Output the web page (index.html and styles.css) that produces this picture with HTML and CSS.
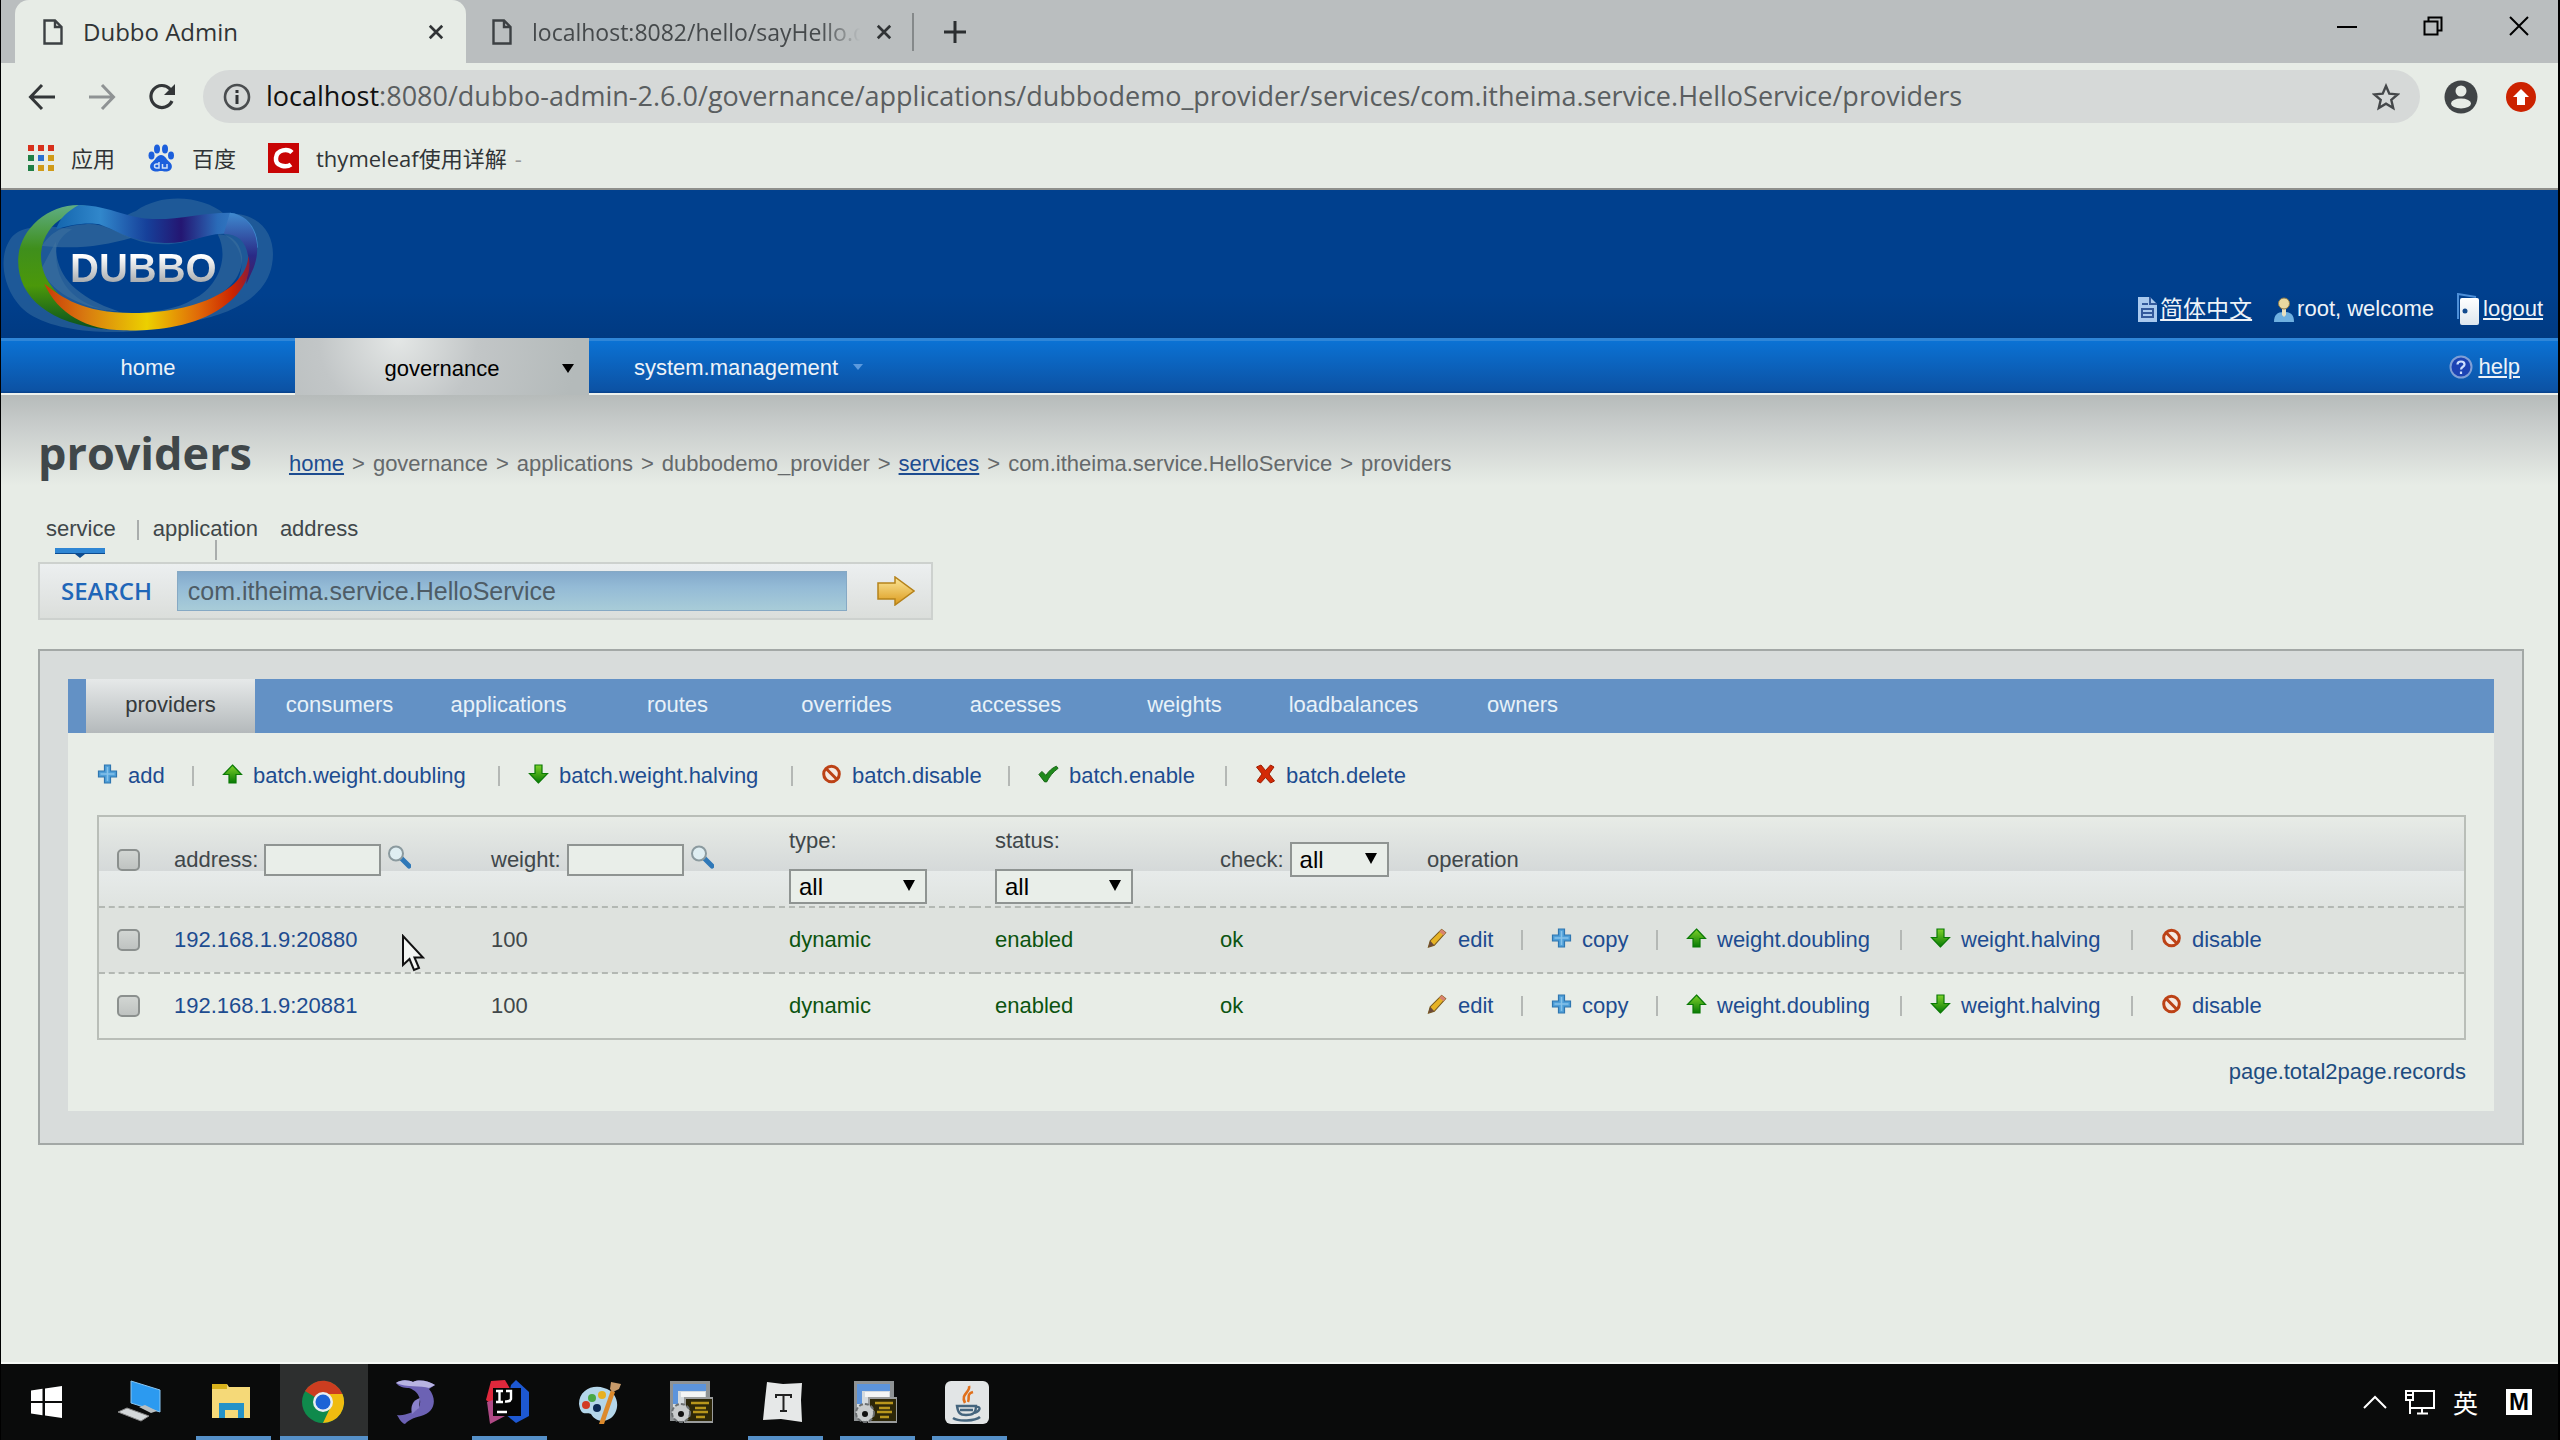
FILE: index.html
```html
<!DOCTYPE html>
<html lang="en">
<head>
<meta charset="utf-8">
<title>Dubbo Admin</title>
<link rel="stylesheet" href="styles.css">
</head>
<body>
<svg class="defs" aria-hidden="true">
  <defs>
    <linearGradient id="g-green" x1="0" y1="0" x2="0" y2="1"><stop offset="0" stop-color="#7fd22a"/><stop offset="1" stop-color="#077a04"/></linearGradient>
    <linearGradient id="g-gold" x1="0" y1="0" x2="0" y2="1"><stop offset="0" stop-color="#fbe79a"/><stop offset="1" stop-color="#dc9a1c"/></linearGradient>
    <linearGradient id="g-door" x1="0" y1="0" x2="0" y2="1"><stop offset="0" stop-color="#ffffff"/><stop offset="1" stop-color="#dde6ee"/></linearGradient>
  </defs>
  <symbol id="i-file" viewBox="0 0 20 26"><path d="M1.500 1.500H12L18.500 8V24.500H1.500Z M12 1.500V8H18.500" fill="none" stroke="#3c4043" stroke-width="2.400"/></symbol>
  <symbol id="i-close" viewBox="0 0 18 18"><path d="M2 2 16 16M16 2 2 16" fill="none" stroke="#303335" stroke-width="3"/></symbol>
  <symbol id="i-plus" viewBox="0 0 20 20"><path d="M7 1h6v6H19v6H13V19H7V13H1V7H7Z" fill="#4f9fd8" stroke="#2f76b0" stroke-width="1.200"/><path d="M9.200 3h1.600v14H9.200zM3 9.200h14v1.600H3z" fill="#86c2ea"/></symbol>
  <symbol id="i-up" viewBox="0 0 20 20"><path d="M10 1 19 10.500H13.500V19H6.500V10.500H1Z" fill="url(#g-green)" stroke="#0b7a06" stroke-width="1.200"/></symbol>
  <symbol id="i-down" viewBox="0 0 20 20"><path d="M10 19 1 9.500H6.500V1H13.500V9.500H19Z" fill="url(#g-green)" stroke="#0b7a06" stroke-width="1.200"/></symbol>
  <symbol id="i-ban" viewBox="0 0 20 20"><circle cx="10" cy="10" r="7.800" fill="#f5e9e2" stroke="#bc4216" stroke-width="3"/><path d="M4.500 4.500 15.500 15.500" stroke="#bc4216" stroke-width="3"/></symbol>
  <symbol id="i-check" viewBox="0 0 24 20"><path d="M1 10.500 4.500 7 9 11.500C12 7 16 3 21 1L23 3.500C17 8 13 13 10 19H7.500Z" fill="#1f8a1c" stroke="#125f10"/></symbol>
  <symbol id="i-cross" viewBox="0 0 20 20"><path d="M1 3 5.500 1 10 6.500 15 1 18.500 3 13.500 10 19 17 15 19 10 13.500 5 19 1.500 17 6.500 10Z" fill="#d42a06" stroke="#9c1d02"/></symbol>
  <symbol id="i-pencil" viewBox="0 0 22 22"><path d="M1 21 3 14 15.500 1.500 20 5 7.500 19Z" fill="#e6b325" stroke="#7a5a1d" stroke-width="1.200"/><path d="M15.500 1.500 20 5 17.500 8 13 4.200Z" fill="#d8826f"/><path d="M1 21 3 14 7.500 19Z" fill="#6b4a3a"/></symbol>
  <symbol id="i-lens" viewBox="0 0 24 24"><path d="M14 13 22 21" stroke="#2f78b8" stroke-width="5" stroke-linecap="round"/><circle cx="9" cy="8.500" r="7" fill="#dfeef2" stroke="#8b9a9f" stroke-width="2"/></symbol>
</svg>

<header class="browser">
  <div class="tabs">
    <div class="tab tab-on"><svg class="tab-file"><use href="#i-file"/></svg><span class="tab-title">Dubbo Admin</span><button class="plain" aria-label="Close tab"><svg class="tab-x"><use href="#i-close"/></svg></button></div>
    <div class="tab tab-off"><svg class="tab-file"><use href="#i-file"/></svg><span class="tab-title fade">localhost:8082/hello/sayHello.do</span><button class="plain" aria-label="Close tab"><svg class="tab-x"><use href="#i-close"/></svg></button></div>
    <button class="plain new-tab" aria-label="New tab"><svg width="24" height="24" viewBox="0 0 24 24"><path d="M12 1V23M1 12H23" stroke="#2b2e30" stroke-width="3"/></svg></button>
    <div class="win">
      <button class="plain" aria-label="Minimize"><svg width="20" height="20" viewBox="0 0 20 20"><path d="M0 11H20" stroke="#000" stroke-width="2"/></svg></button>
      <button class="plain" aria-label="Restore"><svg width="20" height="20" viewBox="0 0 20 20"><path d="M1.500 5.500H14.500V18.500H1.500ZM5.500 5V1.500H18.500V14.500H15" fill="none" stroke="#000" stroke-width="2"/></svg></button>
      <button class="plain" aria-label="Close"><svg width="20" height="20" viewBox="0 0 20 20"><path d="M1 1 19 19M19 1 1 19" stroke="#000" stroke-width="2"/></svg></button>
    </div>
  </div>
  <div class="toolbar">
    <button class="plain" aria-label="Back"><svg width="28" height="28" viewBox="0 0 28 28"><path d="M27 14H3M14 2 2.500 14 14 26" fill="none" stroke="#333638" stroke-width="3"/></svg></button>
    <button class="plain" aria-label="Forward"><svg width="28" height="28" viewBox="0 0 28 28"><path d="M1 14H25M14 2 25.500 14 14 26" fill="none" stroke="#8f9394" stroke-width="3"/></svg></button>
    <button class="plain" aria-label="Reload"><svg width="28" height="28" viewBox="0 0 28 28"><path d="M24 18A11 11 0 1 1 22 6L25 9" fill="none" stroke="#333638" stroke-width="3.200"/><path d="M27 1V12H16Z" fill="#333638"/></svg></button>
    <div class="omnibox">
      <svg width="28" height="28" viewBox="0 0 28 28"><circle cx="14" cy="14" r="12" fill="none" stroke="#4a4d4f" stroke-width="2.600"/><path d="M14 12V21M14 7V10" stroke="#303335" stroke-width="3"/></svg>
      <div class="url"><b>localhost</b>:8080/dubbo-admin-2.6.0/governance/applications/dubbodemo_provider/services/com.itheima.service.HelloService/providers</div>
      <button class="plain" aria-label="Bookmark"><svg width="28" height="28" viewBox="0 0 28 28"><path d="M14 3 17.300 10.700 25.600 11.400 19.300 16.900 21.200 25 14 20.700 6.800 25 8.700 16.900 2.400 11.400 10.700 10.700Z" fill="none" stroke="#45484a" stroke-width="2.400"/></svg></button>
    </div>
    <button class="plain" aria-label="Profile"><svg width="34" height="34" viewBox="0 0 34 34"><circle cx="17" cy="17" r="16.500" fill="#404446"/><circle cx="17" cy="11" r="5.500" fill="#e7ece6"/><ellipse cx="17" cy="23.500" rx="10" ry="5" fill="#e7ece6"/></svg></button>
    <button class="plain" aria-label="Update"><svg width="30" height="30" viewBox="0 0 30 30"><circle cx="15" cy="15" r="15" fill="#cc2200"/><path d="M15 7 23 15H19V23H11V15H7Z" fill="#fff"/></svg></button>
  </div>
  <nav class="bookmarks">
    <a href="#"><svg width="26" height="26" viewBox="0 0 26 26"><path fill="#d8301c" d="M0 0h6v6H0zM10 0h6v6h-6zM20 0h6v6h-6z"/><path fill="#1f7f45" d="M0 10h6v6H0zM0 20h6v6H0z"/><path fill="#2a6fd0" d="M10 10h6v6h-6z"/><path fill="#d09a18" d="M20 10h6v6h-6zM10 20h6v6h-6zM20 20h6v6h-6z"/></svg>应用</a>
    <a href="#"><svg width="28" height="28" viewBox="0 0 28 28"><g fill="#1c5fdc"><ellipse cx="4.500" cy="11.500" rx="3" ry="4"/><ellipse cx="10" cy="5" rx="3" ry="4.500"/><ellipse cx="18" cy="5" rx="3" ry="4.500"/><ellipse cx="24" cy="11.500" rx="3" ry="4"/><path d="M14 11C18 11 19 15 22 17.500 27 21 25 27 20 27.500 17 27.800 16 27 14 27S11 27.800 8 27.500C3 27 1 21 6 17.500 9 15 10 11 14 11Z"/></g><path d="M12 18V24H9.500A2 2 0 0 1 9.500 20H12M15.500 20V24H20V20" fill="none" stroke="#cfe0f8" stroke-width="1.500"/></svg>百度</a>
    <a href="#"><svg width="31" height="30" viewBox="0 0 31 30"><path fill="#c80404" d="M0 0h31v30H0z"/><path d="M24 9.500C20 5.500 9 6 8 15S19 24.500 23 21.500" fill="none" stroke="#fff" stroke-width="4.500"/></svg>thymeleaf使用详解</a>
    <span class="dash">-</span>
  </nav>
</header>

<main class="page">
  <div class="banner">
    <a class="logo" href="#" aria-label="Dubbo">
      <svg class="logo-art" viewBox="0 30 680 441" preserveAspectRatio="none">
        <defs>
          <linearGradient id="l1" x1="0" y1="0" x2="1" y2="0"><stop offset="0" stop-color="#1466ae"/><stop offset=".22" stop-color="#3187cb"/><stop offset=".45" stop-color="#16409a"/><stop offset=".62" stop-color="#241672"/><stop offset=".8" stop-color="#2a6bb8"/><stop offset="1" stop-color="#3f8bd0"/></linearGradient>
          <linearGradient id="l2" x1="0" y1="0" x2="0" y2="1"><stop offset="0" stop-color="#5fae84"/><stop offset=".35" stop-color="#3f8f1c"/><stop offset=".65" stop-color="#4b980a"/><stop offset="1" stop-color="#075020"/></linearGradient>
          <linearGradient id="l3" x1="0" y1="0" x2="1" y2="0"><stop offset="0" stop-color="#c93a08"/><stop offset=".2" stop-color="#d87a10"/><stop offset=".5" stop-color="#ecd000"/><stop offset=".75" stop-color="#e06a08"/><stop offset=".92" stop-color="#cc2400"/><stop offset="1" stop-color="#8c1c3a"/></linearGradient>
          <linearGradient id="l4" x1="0" y1="0" x2="0" y2="1"><stop offset="0" stop-color="#3f8bd0"/><stop offset=".6" stop-color="#2a2a86"/><stop offset="1" stop-color="#4a1a60"/></linearGradient>
        </defs>
        <path d="M330 90C400 30 500 50 545 98C640 90 675 170 663 250C650 350 560 400 470 420C350 465 160 470 70 400C10 350-10 240 20 180C40 130 110 135 140 138C220 165 290 110 330 90Z" fill="#4a7fa8" opacity=".4"/>
        <path d="M205 130C270 120 300 190 400 190C470 190 500 150 545 160C600 200 600 280 560 330C500 385 400 398 320 396C210 395 130 330 135 210C138 170 170 140 205 130Z" fill="#00408e"/>
        <path d="M100 195C190 205 250 195 320 170C270 150 250 125 205 130C150 135 125 150 100 195Z" fill="#3f739e" opacity=".6"/>
        <path d="M530 160C560 230 530 320 470 355C430 385 380 392 340 394C470 396 590 340 590 230C585 180 560 160 530 160Z" fill="#3f739e" opacity=".55"/>
        <path d="M135 180C130 260 160 340 290 392C190 385 110 320 100 260Z" fill="#3f739e" opacity=".6"/>
        <path d="M190 72C110 72 42 150 42 240C42 350 120 430 260 445L215 405C140 350 95 300 98 215C102 165 125 130 150 112L215 76Z" fill="url(#l2)"/>
        <path d="M190 72C250 72 290 100 340 110C410 125 480 95 560 95C600 100 628 140 628 200L600 190C590 160 565 155 540 158C500 160 460 187 400 186C310 182 290 150 240 130C215 122 160 132 135 145C143 110 165 90 190 72Z" fill="url(#l1)"/>
        <path d="M560 95C620 105 640 190 618 260L600 310L605 230C600 180 580 160 545 158Z" fill="url(#l4)"/>
        <path d="M106 308C150 350 200 395 320 396C450 398 600 340 605 225C615 270 600 330 540 380C470 440 370 450 300 448C210 446 140 400 106 308Z" fill="url(#l3)"/>
      </svg>
      <span class="logo-text">DUBBO</span>
    </a>
    <div class="user">
      <a class="pale" href="#"><svg width="19" height="25" viewBox="0 0 19 25"><path d="M0 0H12L19 7V25H0Z" fill="#a9c9ee"/><path d="M12 0V7H19M4 7H10M4 12H15V20H4ZM4 16H15" fill="none" stroke="#33599b" stroke-width="2"/></svg><u>简体中文</u></a>
      <span class="who"><svg width="20" height="25" viewBox="0 0 20 25"><path d="M0 25C0 18 3 15 10 15S20 18 20 25Z" fill="#6fb0e0"/><path d="M8 10h4v8L10 20 8 18Z" fill="#e8e0c0"/><circle cx="10" cy="6.500" r="5.500" fill="#e9d9a0" stroke="#8c7a48"/></svg>root, welcome</span>
      <a href="#"><svg width="24" height="32" viewBox="0 0 24 32"><path d="M2 26V1L20 4" fill="none" stroke="#4d8fd8" stroke-width="2"/><rect x="4" y="5" width="19" height="27" rx="2" fill="url(#g-door)"/><circle cx="9" cy="18" r="2.500" fill="#124a8e"/></svg><u>logout</u></a>
    </div>
  </div>
  <nav class="menu">
    <a href="#">home</a>
    <a class="menu-on" href="#">governance<i class="caret"></i></a>
    <a href="#">system.management<i class="caret caret-dim"></i></a>
    <a class="help" href="#"><svg width="24" height="24" viewBox="0 0 24 24"><circle cx="12" cy="12" r="10.500" fill="#1c43b4" stroke="#7f9fd6" stroke-width="2"/><path d="M8.500 9.500C8.500 5.500 15.500 5.500 15.500 9.500 15.500 12 12 11.500 12 14.500M12 16.500V19" fill="none" stroke="#cfe0ff" stroke-width="2.200"/></svg><u>help</u></a>
  </nav>

  <div class="content">
    <div class="title-row">
      <h1>providers</h1>
      <div class="crumbs"><a href="#">home</a><i>&gt;</i><span>governance</span><i>&gt;</i><span>applications</span><i>&gt;</i><span>dubbodemo_provider</span><i>&gt;</i><a href="#">services</a><i>&gt;</i><span>com.itheima.service.HelloService</span><i>&gt;</i><span>providers</span></div>
    </div>
    <ul class="kinds">
      <li class="kind-on">service</li>
      <li class="kind-app">application</li>
      <li>address</li>
    </ul>
    <form class="search">
      <label for="q">SEARCH</label>
      <input id="q" type="text" value="com.itheima.service.HelloService">
      <button class="plain" type="button" aria-label="Search"><svg width="38" height="30" viewBox="0 0 38 30"><path d="M1 7H18V1L37 15 18 29V23H1Z" fill="url(#g-gold)" stroke="#b5821a" stroke-width="1.500"/></svg></button>
    </form>

    <section class="panel">
      <div class="panel-in">
        <nav class="subtabs">
          <a class="sub-on" href="#">providers</a><a href="#">consumers</a><a href="#">applications</a><a href="#">routes</a><a href="#">overrides</a><a href="#">accesses</a><a href="#">weights</a><a href="#">loadbalances</a><a href="#">owners</a>
        </nav>
        <div class="body">
          <div class="acts batch">
            <span><a href="#"><svg><use href="#i-plus"/></svg>add</a></span>
            <span><a href="#"><svg><use href="#i-up"/></svg>batch.weight.doubling</a></span>
            <span><a href="#"><svg><use href="#i-down"/></svg>batch.weight.halving</a></span>
            <span><a href="#"><svg><use href="#i-ban"/></svg>batch.disable</a></span>
            <span><a href="#"><svg><use href="#i-check"/></svg>batch.enable</a></span>
            <span><a href="#"><svg><use href="#i-cross"/></svg>batch.delete</a></span>
          </div>
          <table>
            <colgroup><col class="c1"><col class="c2"><col class="c3"><col class="c4"><col class="c5"><col class="c6"><col></colgroup>
            <thead>
              <tr>
                <th class="tick"><input type="checkbox" aria-label="Select all"></th>
                <th><div class="filter"><label for="fa">address:</label><input id="fa" type="text"><svg><use href="#i-lens"/></svg></div></th>
                <th><div class="filter"><label for="fw">weight:</label><input id="fw" type="text"><svg><use href="#i-lens"/></svg></div></th>
                <th class="low"><div class="stack"><label for="ft">type:</label><span class="sel wide"><select id="ft"><option>all</option></select></span></div></th>
                <th class="low"><div class="stack"><label for="fs">status:</label><span class="sel wide"><select id="fs"><option>all</option></select></span></div></th>
                <th><div class="filter"><label for="fc">check:</label><span class="sel"><select id="fc"><option>all</option></select></span></div></th>
                <th>operation</th>
              </tr>
            </thead>
            <tbody>
              <tr class="shade">
                <td class="tick"><input type="checkbox" aria-label="Select 192.168.1.9:20880"></td>
                <td class="host"><a href="#">192.168.1.9:20880</a><svg class="pointer" viewBox="0 0 24 38"><path d="M2 2V31L8.500 25 13 36 18 34 13.500 23.500H22Z" fill="#f4f6f3" stroke="#111" stroke-width="2"/></svg></td>
                <td>100</td><td class="good">dynamic</td><td class="good">enabled</td><td class="good">ok</td>
                <td><div class="acts ops">
                  <span><a href="#"><svg><use href="#i-pencil"/></svg>edit</a></span>
                  <span><a href="#"><svg><use href="#i-plus"/></svg>copy</a></span>
                  <span><a href="#"><svg><use href="#i-up"/></svg>weight.doubling</a></span>
                  <span><a href="#"><svg><use href="#i-down"/></svg>weight.halving</a></span>
                  <span><a href="#"><svg><use href="#i-ban"/></svg>disable</a></span>
                </div></td>
              </tr>
              <tr>
                <td class="tick"><input type="checkbox" aria-label="Select 192.168.1.9:20881"></td>
                <td><a href="#">192.168.1.9:20881</a></td>
                <td>100</td><td class="good">dynamic</td><td class="good">enabled</td><td class="good">ok</td>
                <td><div class="acts ops">
                  <span><a href="#"><svg><use href="#i-pencil"/></svg>edit</a></span>
                  <span><a href="#"><svg><use href="#i-plus"/></svg>copy</a></span>
                  <span><a href="#"><svg><use href="#i-up"/></svg>weight.doubling</a></span>
                  <span><a href="#"><svg><use href="#i-down"/></svg>weight.halving</a></span>
                  <span><a href="#"><svg><use href="#i-ban"/></svg>disable</a></span>
                </div></td>
              </tr>
            </tbody>
          </table>
          <p class="total">page.total2page.records</p>
        </div>
      </div>
    </section>
  </div>
</main>

<footer class="taskbar">
  <button class="task" aria-label="Start"><svg viewBox="0 0 44 44"><path d="M6 10.500 17.500 8.800V21H6ZM20 8.400 37 6V21H20ZM6 23H17.500V35.200L6 33.500ZM20 23H37V38L20 35.600Z" fill="#fff"/></svg></button>
  <button class="task" aria-label="This PC"><svg viewBox="0 0 44 44"><path d="M14 1 43 10V32L14 23Z" fill="#2c9af0" stroke="#8ac6f2"/><path d="M1 32 10 28 32 36 24 41Z" fill="#d4d8da" stroke="#888"/><path d="M22 27 28 25 40 31 34 33Z" fill="#b9bec0"/></svg></button>
  <button class="task run" aria-label="File Explorer"><svg viewBox="0 0 44 44"><path d="M3 4H18L20 7H41V38H3Z" fill="#f5d978"/><path d="M3 4H18V9H3Z" fill="#d9b21c"/><path d="M10 38V23H35V38H29V30H16V38Z" fill="#2492c8"/></svg></button>
  <button class="task run active" aria-label="Chrome"><svg viewBox="0 0 44 44"><circle cx="22" cy="22" r="21" fill="#0f8a4c"/><path d="M22 22 4 11A21 21 0 0 1 41.500 14H22Z" fill="#cc3d20"/><path d="M26 14H41.500A21 21 0 0 1 22 43L30 26Z" fill="#f0bc10"/><circle cx="22" cy="22" r="10" fill="#e8eef2"/><circle cx="22" cy="22" r="7.500" fill="#1d63d6"/></svg></button>
  <button class="task" aria-label="Dolphin"><svg viewBox="0 0 44 44"><path d="M3 3C8-1 16 0 20 2C26-1 36 1 42 5L36 9C45 20 41 33 28 36C20 38 16 40 12 44C8 43 6 38 4 35C9 36 13 34 17 33C24 31 28 27 27 20C26 14 22 10 16 8C11 8 6 7 3 3Z" fill="#6c62b4"/><path d="M3 3C8-1 16 0 20 2C26-1 36 1 42 5L36 8C28 5 14 8 3 3Z" fill="#b8b4e2"/><path d="M27 18C20 20 17 26 19 34L26 28Z" fill="#8a82cc"/></svg></button>
  <button class="task run" aria-label="IntelliJ IDEA"><svg viewBox="0 0 44 44"><path d="M6 1 20 0 27 12 12 28 1 20Z" fill="#e0283c"/><path d="M26 5 31 0 44 12V36L31 43 20 34Z" fill="#1d58d2"/><path d="M2 22 14 18 20 36 5 44Z" fill="#b04a86"/><path d="M8 8H36V36H8Z" fill="#050505"/><path d="M11 11H18M11 22H18M14.500 11V22M21 11H26V19Q25 22 20 21.500M12 32H22" fill="none" stroke="#fff" stroke-width="2.400"/></svg></button>
  <button class="task" aria-label="Paint"><svg viewBox="0 0 44 44"><path d="M2 24C2 10 16 4 27 8C42 12 44 30 34 38C24 45 16 38 14 34C10 31 4 38 2 24Z" fill="#b4d6ea"/><circle cx="9" cy="25" r="4" fill="#d23a24"/><circle cx="15" cy="18" r="4" fill="#48a846"/><circle cx="25" cy="15" r="4" fill="#e8b022"/><circle cx="20" cy="28" r="4" fill="#0c2a54"/><path d="M22 44 34 10 38 12 27 44Z" fill="#dc8a2c"/><path d="M34 2 44 4 42 9 36 12 33 9Z" fill="#c79a6a"/></svg></button>
  <button class="task" aria-label="Viewer"><svg viewBox="0 0 44 44"><path d="M1 1H41V41H1Z" fill="#8e9294"/><path d="M4 4H37V34H4Z" fill="#d4dade"/><path d="M4 4H37V11H4ZM4 11H9V24H4Z" fill="#5c94dc"/><path d="M12 12H36V17H12Z" fill="#f4f5f5"/><path d="M16 18H44V42H16Z" fill="#2c2608" stroke="#9a9c9c" stroke-width="2"/><path d="M22 23H40M26 28H37M24 32H39M27 37H36" stroke="#b8961c" stroke-width="2.600"/><circle cx="12" cy="33" r="9" fill="#c9cccd" stroke="#6c7072" stroke-width="2" stroke-dasharray="4 2"/><circle cx="12" cy="34" r="3" fill="#111"/></svg></button>
  <button class="task run" aria-label="Typora"><svg viewBox="0 0 44 44"><path d="M6 2 22 4 41 3 40 20 41 42 20 39 2 40 4 20Z" fill="#e6e8e8"/><path d="M15 18V15H30V18M22.500 15V31M19 31H26" fill="none" stroke="#222" stroke-width="2"/></svg></button>
  <button class="task run" aria-label="Viewer"><svg viewBox="0 0 44 44"><path d="M1 1H41V41H1Z" fill="#8e9294"/><path d="M4 4H37V34H4Z" fill="#d4dade"/><path d="M4 4H37V11H4ZM4 11H9V24H4Z" fill="#5c94dc"/><path d="M12 12H36V17H12Z" fill="#f4f5f5"/><path d="M16 18H44V42H16Z" fill="#2c2608" stroke="#9a9c9c" stroke-width="2"/><path d="M22 23H40M26 28H37M24 32H39M27 37H36" stroke="#b8961c" stroke-width="2.600"/><circle cx="12" cy="33" r="9" fill="#c9cccd" stroke="#6c7072" stroke-width="2" stroke-dasharray="4 2"/><circle cx="12" cy="34" r="3" fill="#111"/></svg></button>
  <button class="task run" aria-label="Java"><svg viewBox="0 0 44 44"><rect x="0" y="1" width="44" height="43" rx="6" fill="#e2e5e6"/><path d="M24 6C26 12 15 14 20 23M28 12C21 14 25 18 23 22" fill="none" stroke="#e0701c" stroke-width="2.600"/><path d="M12 26H31C31 34 27 35 21 35S13 33 12 26ZM31 27C37 26 35 32 28 33" fill="none" stroke="#45657e" stroke-width="2.400"/><path d="M15 30H28M8 38C14 42 30 41 35 37" fill="none" stroke="#45657e" stroke-width="2.600"/></svg></button>
  <div class="tray">
    <svg width="24" height="14" viewBox="0 0 24 14"><path d="M1 13 12 2 23 13" fill="none" stroke="#fff" stroke-width="2"/></svg>
    <svg width="30" height="26" viewBox="0 0 30 26"><path d="M9 2H29V19H6M17 19V24M12 24.500H23M5 11V25M1 2H8V11H1ZM2 6H7" fill="none" stroke="#fff" stroke-width="2"/></svg>
    <span>英</span>
    <span class="ime">M</span>
  </div>
</footer>
</body>
</html>
```
FILE: styles.css
```css
* { box-sizing: border-box; }

body {
  margin: 0;
  min-height: 100vh;
  display: flex;
  flex-direction: column;
  border-left: 1px solid #000;
  border-right: 2px solid #000;
  background: #e7ece6;
  color: #40474a;
  font: 22px/30px "Liberation Sans", Arial, "Noto Sans CJK SC", sans-serif;
}

.defs { position: absolute; width: 0; height: 0; }
svg { flex: none; display: block; }
a { color: #1d4c90; text-decoration: none; }
.plain { border: 0; padding: 0; background: none; display: flex; }

/* Browser chrome */
.browser { height: 190px; border-bottom: 2px solid #8f908c; font-family: "Open Sans", "Noto Sans CJK SC", sans-serif; color: #303436; }
.tabs { display: flex; align-items: center; height: 63px; padding-left: 14px; background: #babebf; }
.tab { display: flex; align-items: center; height: 63px; padding: 0 22px 0 28px; }
.tab-on { width: 451px; background: #e7ece6; border-radius: 14px 14px 0 0; }
.tab-off { width: 448px; height: 38px; padding-left: 26px; padding-right: 20px; border-right: 2px solid #85898a; }
.tab-file { width: 20px; height: 26px; }
.tab-title { flex: 1; margin: 0 16px 0 20px; font-size: 24px; line-height: 36px; white-space: nowrap; overflow: hidden; }
.tab-off .tab-title { font-size: 23px; }
.fade { -webkit-mask-image: linear-gradient(90deg, #000 88%, transparent); mask-image: linear-gradient(90deg, #000 88%, transparent); color: #45494b; }
.tab-x { width: 16px; height: 16px; }
.new-tab { margin-left: 29px; }
.win { margin-left: auto; display: flex; gap: 66px; padding: 0 29px 12px 0; }
.toolbar { display: flex; align-items: center; gap: 32px; height: 67px; padding: 0 22px 0 27px; }
.omnibox { flex: 1; display: flex; align-items: center; height: 53px; margin-right: -8px; margin-left: -5px; padding: 0 20px; border-radius: 27px; background: #d6d9d8; }
.omnibox + .plain { margin-right: -4px; }
.url { flex: 1; margin-left: 15px; padding-bottom: 2px; font-size: 27px; white-space: nowrap; color: #5a5e60; }
.url b { font-weight: 400; color: #111; }
.bookmarks { display: flex; gap: 32px; height: 56px; align-items: center; padding-left: 27px; font-size: 22px; }
.bookmarks a { display: flex; align-items: center; gap: 17px; color: #303436; }
.dash { margin-left: -24px; color: #999; }

/* Banner */
.banner { display: flex; justify-content: space-between; align-items: flex-end; height: 148px; background: linear-gradient(#00408e 70%, #003a82); color: #eef3f8; }
.logo { position: relative; }
.logo-art { width: 278px; height: 147px; }
.logo-text { position: absolute; left: 69px; top: 57px; font: bold 40px/40px "Liberation Sans", Arial, sans-serif; color: transparent; background: linear-gradient(#fff 20%, #a9adb0 85%); -webkit-background-clip: text; background-clip: text; }
.user { display: flex; align-items: center; gap: 22px; padding: 0 15px 13px 0; }
.user > * { display: flex; align-items: center; gap: 3px; color: #eef3f8; }
.user .pale { font-size: 23px; }

.menu { display: flex; height: 57px; border-top: 3px solid #2f86d8; border-bottom: 2px solid #eef2ee; background: linear-gradient(#0b72d4, #0c52a4 95%, #084088); }
.menu a { position: relative; width: 294px; padding-top: 2px; display: flex; align-items: center; justify-content: center; color: #eef3f8; }
.menu .menu-on { margin: -3px 0 -2px; padding-top: 4px; color: #000; background: radial-gradient(circle at 35% 0, #e4e7e6, #c2c6c7 40%, #b4baba 90%); }
.caret { position: absolute; right: 15px; top: 26px; border: 6px solid transparent; border-top: 9px solid #000; border-bottom: 0; }
.caret-dim { right: 20px; top: 23px; border-width: 6px 5px 0; border-top-color: #5b9ade; }
.menu .help { width: auto; margin-left: auto; padding: 0 38px 0 0; gap: 5px; }

/* Page content */
.page { flex: 1; }
.content { padding: 24px 34px 24px 37px; background: linear-gradient(#b6bbba, #c8cccb 30px, #e7ece6 90px); }
.title-row { display: flex; align-items: flex-end; gap: 37px; height: 64px; }
h1 { margin: 0; font: bold 45px/60px "Open Sans", "Noto Sans", sans-serif; color: #40474a; }
.crumbs { display: flex; gap: 8px; margin-bottom: 4px; color: #65696b; }
.crumbs i { font-style: normal; }
.crumbs a { color: #1d4c90; text-decoration: underline; }

.kinds { display: flex; margin: 31px 0 18px; padding: 0 0 0 8px; list-style: none; }
.kinds li { position: relative; margin-right: 22px; }
.kinds .kind-on { padding-right: 22px; margin-right: 15px; }
.kind-on::before { content: ""; position: absolute; right: -1px; top: 6px; height: 20px; border-right: 2px solid #a9adac; }
.kind-on::after { content: ""; position: absolute; left: 9px; top: 34px; width: 50px; height: 10px; background: linear-gradient(#2f86d4 50%, #0e4c90 50%); clip-path: polygon(0 0, 100% 0, 100% 60%, 60% 60%, 50% 100%, 40% 60%, 0 60%); }
.kind-app::after { content: ""; position: absolute; left: 62px; top: 26px; height: 20px; border-left: 2px solid #a9adac; }

.search { display: flex; align-items: center; width: 895px; height: 58px; padding: 0 16px 0 21px; border: 2px solid #cdd1ce; background: linear-gradient(#eceff0, #dbdedb); }
.search label { width: 116px; font: 600 24px/30px "Open Sans", "Noto Sans", sans-serif; color: #1f66b8; }
.search input { width: 671px; height: 40px; margin-right: 30px; padding: 0 10px; border: 1px solid #86a9c4; background: linear-gradient(#83a9cb, #94bbd6 40%, #a8ccd8); color: #4e5c66; font: 25px/30px "Liberation Sans", Arial, sans-serif; }

.panel { margin-top: 29px; padding: 28px 28px 32px; border: 2px solid #a3a8a6; background: #d8dcdb; }
.panel-in { min-height: 432px; background: #e8ede7; }
.subtabs { display: flex; height: 54px; padding-left: 18px; background: #6391c5; }
.subtabs a { width: 169px; display: flex; align-items: center; justify-content: center; padding-bottom: 2px; color: #e8f1f8; }
.subtabs .sub-on { color: #35393b; background: linear-gradient(#e6e9e9, #b4b9bb); }
.body { padding: 28px 28px 0 29px; }

.acts { display: grid; }
.acts span { display: flex; align-items: center; }
.acts span:not(:last-child)::after { content: ""; margin: 0 28px 0 auto; height: 20px; border-left: 2px solid #b4b8b5; }
.acts a { display: flex; align-items: center; gap: 10px; }
.acts svg { width: 21px; height: 20px; margin-bottom: 5px; }
.batch { grid-template-columns: 125px 306px 293px 217px 217px auto; margin-bottom: 24px; }
.ops { grid-template-columns: 124px 135px 244px 231px auto; }

table { width: 100%; table-layout: fixed; border-collapse: collapse; border: 2px solid #b9beb8; }
.c1 { width: 56px; } .c2 { width: 317px; } .c3 { width: 298px; } .c4 { width: 206px; } .c5 { width: 225px; } .c6 { width: 207px; }
thead tr { height: 91px; background: linear-gradient(#e8ece7, #d5d9d9 60%, #e7ebea 60%, #dfe3e0); }
tbody tr { height: 66px; border-top: 2px dashed #b3b8b3; }
th, td { padding: 0 0 0 20px; text-align: left; font-weight: 400; }
th { padding-bottom: 4px; }
th.low { padding-bottom: 2px; vertical-align: bottom; }
.tick { padding-left: 18px; }
.shade { background: #dee2de; }
.good { color: #0c5410; }
.host { position: relative; }
.pointer { position: absolute; left: 247px; top: 26px; width: 24px; height: 38px; }
input[type="checkbox"] { appearance: none; display: block; width: 23px; height: 22px; margin: 0; border: 2px solid #8b908e; border-radius: 5px; background: linear-gradient(#d2d6d3, #bfc3c1); }
.filter { display: flex; align-items: center; gap: 6px; }
.filter input { width: 117px; height: 32px; border: 2px solid #8f9492; background: #e9eee9; }
.filter svg { width: 24px; height: 24px; margin-bottom: 6px; }
.stack { display: flex; flex-direction: column; gap: 13px; }
.sel { position: relative; display: block; width: 99px; height: 35px; }
.sel.wide { width: 138px; }
.sel::after { content: ""; position: absolute; right: 12px; top: 11px; border: 6px solid transparent; border-top: 11px solid #000; border-bottom: 0; }
select { appearance: none; width: 100%; height: 100%; padding: 0 8px; border: 2px solid #8f9492; border-radius: 0; background: #e9eee9; color: #000; font: 24px/30px "Liberation Sans", Arial, sans-serif; }
.total { margin: 17px 0 0; text-align: right; color: #1d4c80; }

/* Taskbar */
.taskbar { display: flex; height: 78px; border-top: 2px solid #f6f9f5; background: #0a0b0b; margin: 0 -2px 0 -1px; }
.task { width: 92px; padding: 0 0 0 2px; border: 0; background: none; display: grid; place-items: center; position: relative; }
.task svg { width: 44px; height: 44px; }
.run::after { content: ""; position: absolute; left: 12px; right: 5px; bottom: 0; height: 4px; background: #5590c8; }
.active { background: linear-gradient(#2d2f2f, #2d2f2f) 4px 0 / 88px 100% no-repeat; }
.active::after { left: 4px; right: 0; }
.tray { margin-left: auto; display: flex; align-items: center; gap: 18px; padding-right: 28px; color: #fff; font: 25px/30px "Noto Sans CJK SC", sans-serif; }
.tray .ime { width: 26px; height: 26px; margin-left: 10px; font: bold 24px/26px "Liberation Sans", Arial, sans-serif; text-align: center; background: #fff; color: #000; }
```
